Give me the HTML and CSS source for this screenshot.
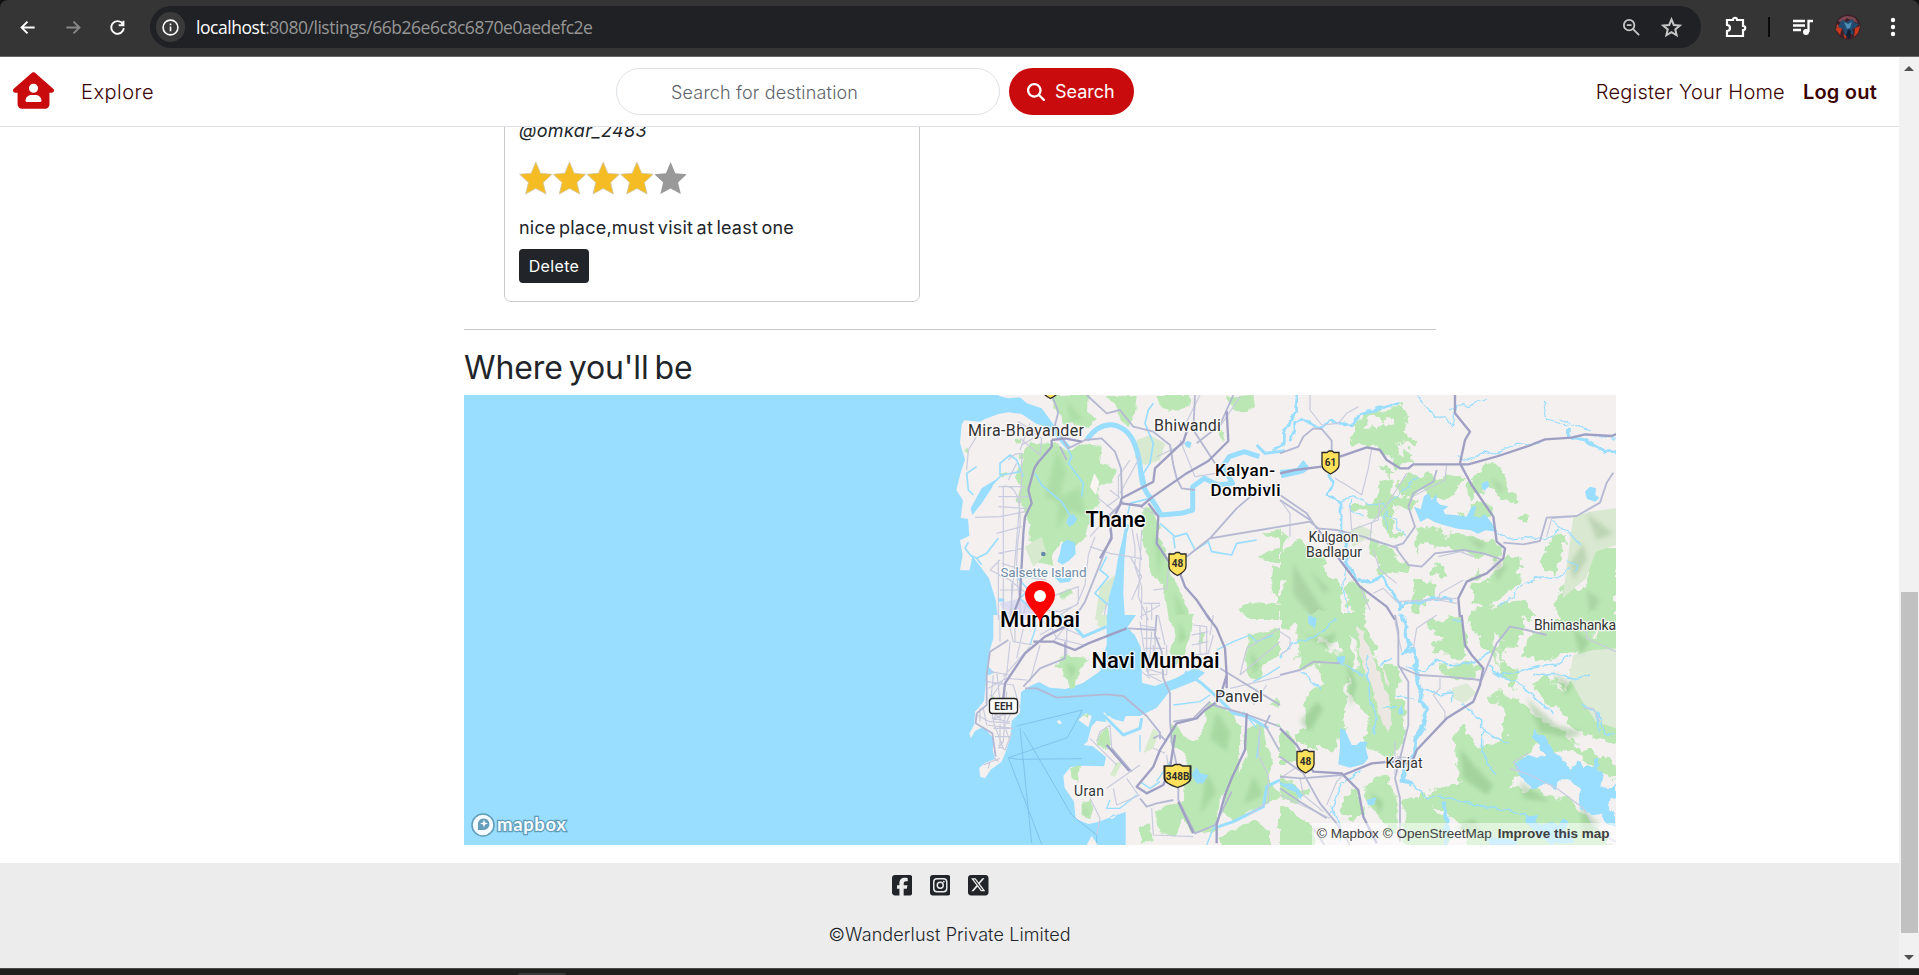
FILE: index.html
```html
<!DOCTYPE html>
<html lang="en">
<head>
<meta charset="utf-8">
<title>Wanderlust</title>
<link rel="stylesheet" href="styles.css">
</head>
<body>
<div class="chrome">
  <svg class="ico back" viewBox="0 0 24 24"><path d="M21 12H5M12 4.500L4.500 12l7.500 7.500"/></svg>
  <svg class="ico forward" viewBox="0 0 24 24"><path d="M3 12h16M12 4.500l7.500 7.500-7.500 7.500"/></svg>
  <svg class="ico reload" viewBox="0 0 24 24"><path d="M18.600 7.400A8 8 0 1 0 20 12.800M19.500 3.500v5.700h-6"/></svg>
  <div class="omnibox">
    <span class="info"><svg viewBox="0 0 20 20"><circle cx="10" cy="10" r="7.800"/><path d="M10 9v5M10 5.700v1.800"/></svg></span>
    <span class="url"><b>localhost</b>:8080/listings/66b26e6c8c6870e0aedefc2e</span>
    <svg class="tool" viewBox="0 0 20 20"><circle cx="7.500" cy="7.500" r="5.500"/><path d="M11.700 11.700L18 18M5 7.500h5"/></svg>
    <svg class="tool star" viewBox="0 0 20 20"><path d="M10 2.300l2.200 5.300 5.700.5-4.300 3.700 1.300 5.600-4.900-3-4.900 3 1.300-5.600L2.100 8.100l5.700-.5z"/></svg>
  </div>
  <svg class="puzzle" viewBox="0 0 22 22"><path d="M2 4h6c0-3 4-3 4 0h6v6c3 0 3 4 0 4v6H2v-5c4 0 4-6 0-6z"/></svg>
  <span class="divider"></span>
  <svg class="media" viewBox="0 0 20 18"><path d="M0 3h12M0 7.500h12M0 12h8M15.500 14V3H20" /><circle cx="13" cy="14" r="3"/></svg>
  <svg class="avatar" viewBox="0 0 26 26"><circle cx="13" cy="13" r="12.500" fill="#3d2028"/><path d="M3 7Q10-1 20 4L23 9 17 7 12 4 7 9z" fill="#7b4650"/><path d="M2 10l5 4-2 7-4-5zM20 14l5-2-2 7-4 4zM8 20l4 2-2 3z" fill="#c7381d"/><path d="M7 6l5 2 5-3 3 4 4 1-4 4-3 1 2 6-5-2-4 3-2-7-5-2 2-4z" fill="#234b72"/><path d="M9 8l4 2 4-2-2 6-3 1z" fill="#4e8eb5"/><path d="M13 15l3 2-1 8-4-3z" fill="#142031"/></svg>
  <svg class="dots" viewBox="0 0 6 20"><circle cx="3" cy="3" r="2.200"/><circle cx="3" cy="10" r="2.200"/><circle cx="3" cy="17" r="2.200"/></svg>
</div>
<div class="window">
  <div class="page">
    <nav class="nav">
      <svg class="brand" viewBox="0 0 576 512"><path d="M575.800 255.500c0 18-15 32.100-32 32.100h-32l.7 160.200c.2 35.500-28.500 64.300-64 64.300H128.100c-35.300 0-64-28.700-64-64V287.600H32c-18 0-32-14-32-32.100 0-9 3-17 10-24L266.400 8c7-7 15-8 22-8s15 2 21 7l255.400 224.500c8 7 12 15 11 24zM352 224a64 64 0 1 0-128 0 64 64 0 1 0 128 0zm-96 96c-44.200 0-80 35.800-80 80 0 8.800 7.200 16 16 16h192c8.800 0 16-7.200 16-16 0-44.200-35.800-80-80-80z"/></svg>
      <a class="explore">Explore</a>
      <div class="search">
        <div class="field">Search for destination</div>
        <div class="go"><svg viewBox="0 0 512 512"><path d="M416 208c0 45.900-14.900 88.300-40 122.700L502.600 457.400c12.500 12.500 12.500 32.800 0 45.300s-32.800 12.500-45.300 0L330.700 376c-34.400 25.200-76.800 40-122.700 40C93.100 416 0 322.900 0 208S93.100 0 208 0s208 93.100 208 208zM208 352a144 144 0 1 0 0-288 144 144 0 1 0 0 288z"/></svg><span>Search</span></div>
      </div>
      <a class="register">Register Your Home</a>
      <a class="logout">Log out</a>
    </nav>
    <main>
      <article class="card">
        <div class="user">@omkar_2483</div>
        <svg class="stars" viewBox="0 0 169 34">
          <defs><path id="star" d="M16.800 1l4.700 11.200L33 13.300l-8.800 8.200L27 33l-10.200-5.600L6.600 33l2.800-11.500L.6 13.300l11.500-1.100z"/></defs>
          <g fill="#f5bd23" stroke="#cfc6a6" stroke-width=".8"><use href="#star"/><use href="#star" x="33.700"/><use href="#star" x="67.400"/><use href="#star" x="101.100"/></g>
          <use href="#star" x="134.800" fill="#999"/>
        </svg>
        <div class="comment">nice place,must visit at least one</div>
        <div class="delete">Delete</div>
      </article>
      <hr>
      <h3>Where you'll be</h3>
      <div class="map">
      <svg class="canvas" viewBox="464 395 1152 450">
        <defs>
          <filter id="soft" x="-20%" y="-20%" width="140%" height="140%"><feGaussianBlur stdDeviation="7"/></filter>
          <!-- roughens the outlines of coasts, lakes and woods -->
          <filter id="ragged" x="-5%" y="-5%" width="110%" height="110%" color-interpolation-filters="sRGB"><feTurbulence type="fractalNoise" baseFrequency=".028" numOctaves="3" seed="4" result="n"/><feDisplacementMap in="SourceGraphic" in2="n" scale="46" xChannelSelector="R" yChannelSelector="G"/></filter>
          <filter id="wavy" x="-5%" y="-5%" width="110%" height="110%" color-interpolation-filters="sRGB"><feTurbulence type="fractalNoise" baseFrequency=".035" numOctaves="2" seed="9" result="n"/><feDisplacementMap in="SourceGraphic" in2="n" scale="20" xChannelSelector="R" yChannelSelector="G"/></filter>
          <path id="shield" d="M-8.500-9.500h5L-1.500-11h3l2 1.500h5V3C8.500 7 4 10 0 12-4 10-8.500 7-8.500 3z"/>
        </defs>
        <rect x="464" y="395" width="1152" height="450" fill="#99ddff"/>

        <!-- land -->
        <g fill="#f3f0ef">
          <rect x="1270" y="395" width="346" height="450"/>
          <path transform="translate(940 390) scale(.33333)" d="M115 15l20 12 30-7 15-5H1020V700H175l-8-70-20-65-28-38-22-28-8 42H60l8-45-8-45 28-14-4-50-22-4 7-52-20-30 12-50 14-42-15-50 5-55z"/>
          <g transform="translate(940 615) scale(.33333)">
            <path d="M160 0v70l-12 40-2 45 18 18-25 10-7 75-27 32-2 38-15 28 5 14 12-22 25-13 30 35-2 35 7 27-30 12-17 14 2 27 15 5 17-26 33-24 12-30 14-40 4-52 25-25 3-61 22-16 32-15 32 17 48 4 52-18 77-54V0z"/>
            <path d="M590 0l-35 40 28 18 20 40 2 108 25 12 52-16-10 38-32 12-38 38-40 2-12 28-30-8-30-22 8 32-28-5-16 18-12 45-12 10 28 4 40 32-6 28-60-2-40 4-22 26 4 36 28 42 5 52 38 15 28-6 72-26 12-4v107h480V0zM415 315l22-20 18 8-10 34zM350 320l8-6 8 10-8 4zM440 690l15-28 18 28zM510 605l12-8 5 8-12 8z"/>
          </g>
        </g>

        <!-- north west quarter -->
        <g transform="translate(940 390) scale(.33333)">
          <g fill="#bbe7b5" filter="url(#wavy)">
            <path d="M330 15h115v50l25 25-25 20-75-10-25-40zM495 15h98l-5 55-22 38-22-12-14-45zM650 15h100l-5 35-40 15-45-15z"/>
            <path d="M345 160l40 25 40-25 60 10-5 50 50 20-10 35-40 10-10 30 15 20-30 35-15 70-45 40-30-25-30 40 5 35-45-10 10-45-40-25 5-45-20-50-20-20 10-40-15-35 20-50 15-40 15-15z"/>
            <path d="M610 350l30 5 20 55-10 30 30 40 5 50 35 70 30 70-10 40h-50l-20-130-35-20-10-60-20-50zM860 20l80-5 5 35-25 20-35-8-20-30zM825 120l30 10-5 20zM965 430l55-10v30zM950 500l70-30v50l-40-5zM1000 530l20 5v90l-28-30zM890 655l50-20 80 10v45h-90z"/>
            <path d="M225 147l15-2v15h-15zM240 190h15v12h-15zM70 190l12-15v20zM175 250l25-8-8 22zM360 610l30-15 10 20-35 15z"/>
          </g>
          <g fill="#d7ead0"><path d="M590 150l40-15 45 25-15 50-45 15-30-20zM480 590l45-35-5 60-45 75h-10zM255 470l50-30 15 50-40 40z"/></g>
          <g fill="#98cf92" opacity=".38" filter="url(#soft)"><path d="M350 180l30 60-20 80 60-30 20 90-50-20-40 60 5-80-40-20zM380 30l50 60-40 5zM640 430l30 60-15 70zM700 600l40 70-30 20z"/></g>
          <path fill="#fbf5f2" d="M463 250l15 25-10 40-18-25z"/>
          <path fill="#dcdcf2" d="M180 640l60-15 60 30-20 35h-80z"/>
          <g fill="#99ddff">
            <path d="M50 15h115l40 10 35-3 20 18 45 15 22 30 35 50 30 35-8 12-60-70-34-10-45-30-40-5-30 5-40 15-15 8-55-5z"/>
            <path d="M165 270l-10 25-30 45-28 35-5-20 33-60zM385 380l15-8 12 15-10 15-15 8-8-14zM365 462l15-13 25 8 2 35-20 20-20 12-15-10 8-25zM338 555l35 10 35-12-20 22-28 4zM733 160l10-8 12 6-5 17-12-5zM175 625h18v10h-18z"/>
            <path d="M557 400l-8 40-14 60-10 60-18 60-7 70h55l-5-80 3-100 8-80 8-25z"/>
          </g>
          <g class="river"><path stroke-width="15" d="M440 150q35-50 80-45 45 8 65 60 15 40 18 90 5 45 30 70 20 30 30 50l60-5 35-10v-70l35-25 40 20 45-5-30-50 20-30 45-15 45 15"/>
            <path stroke-width="9" d="M950 165l25 25 60-8"/>
            <path stroke-width="5" d="M90 495l20 10 30-15 35-45M95 500l-20-25 10-18M110 505l15 20M150 290l35-35 55-10M180 255v-35l30-25 20 15 20 50M100 315l-15-15-5-50 30-20M385 180l10 20-10 20 45 60-5 40M285 250l20 35 60 50 30 50M620 300l-10-50 20-30 10-60-25-60 10-40 15-20M660 400l45 40 35-10 25 50 40-25 10 30 60 10 15-35 60-10M700 440l5 35M500 500l-20 40 25 20-40 50 40 35M560 390l10-50 60-15M230 560l35 40-25 25 30 30"/></g>
          <g class="road thin"><path d="M185 290q60-15 55 120-20 120 0 220v60M205 210q15-20 40-20v80l-15 180-20 240M175 290h80M175 320h90M190 290v400M175 350l85 5M180 380l75-15M105 382l80-2M170 430l75-20M175 490l75-15M185 520l65 20M180 560l80-20M180 600h70M230 220l-25 50M215 580v110M150 540l60 30 60 50M175 510v180M150 540l30-30M250 560l70 10M255 590l80 30 80-30v50l-70 45M265 620l-20 70M270 100l-30 80M240 145l60 50 5-50-65-40-5-10 50 30M245 165l35-20M490 690l10-50M465 440l-20 55-10 90-25 60-50 20-90-10M450 470l60 20 90 15M470 320l60 50M510 300l25 20v-60l35-50M500 350l40-30M600 200l-60 110M605 420l-10 200 30 70M575 410l10 60v60l20 60v100M590 430l15 80M540 340l-90 100M600 350l60 30M640 600l40-5 10-110M610 640h50M600 680l60-35M570 500l35 60-30 70M620 650v40M635 640v50M80 240l5-60 30-50 50-20M650 200l85-40M720 150l45 110 130-20M780 15l-40 80M900 20l-60 90"/></g>
          <g class="road"><path d="M335 15l20 50-10 40 40 70 50-25 50-5 40 40 18 50 3 90M440 15l60 55 40-10 40 50 60 15 50 40 10 60 10 40 15 30 40 5M765 15l-5 105 65 100M880 15l-40 90-70 55M810 445l80-90 70-60 60-10M740 500l70-55 210-35M550 335l-40 40 5 60-80 200-35 55M360 170l20 40"/></g>
          <g class="road major"><path d="M335 150v20l-30 35q-20 20-25 40l-15 55 10 40-20 40-5 50-10 190-15 40M335 150l40-5 50 10M545 325l95-50 5-40 85-80 10-30M545 340l60 8 30-25 100-70 70-40 60-60-5-90M625 340l30 40-5 80 40 60 30 30 15 40 35 40 40 60M545 325l-5 20-30 60 5 40-35 60"/></g>
          <circle cx="310" cy="492" r="7" fill="#6488a5"/>
        </g>

        <!-- north east quarter -->
        <g transform="translate(1280 390) scale(.33333)">
          <g fill="#bbe7b5" filter="url(#ragged)">
            <path d="M240 85l50-30 40 15 15-25 15-5 25 35-8 15 5 40 20 25v5l-65 5-20 20-20-25-30 5-35 5-10-15-10-10z"/>
            <path d="M315 175l30-10 10 15-5 15 20-20 25 5-5 20 15 10v15l-15-10-40 20-10-25-30-20zM300 225h25l20 15-20 5 15 45-5 25 35 10 20-15-20-20-5-20 30 5 10 30-15 20 30 10-25 30-55-20v30l-60 5-20-20-50 5v-20l60-5 25-15 10-50 25-15z"/>
            <path d="M375 245l45 10 60 10 15-10 30 15 30-15 10 10-35 25-10 25-35 25-45-20-30-20-40 15-20-30zM560 280l45-35 10-25 20-10 10 30 35 20v45l35 20-25 15-40-30-35-10-45 30zM545 375l50-35 35 5 10 15-40 40-50 5zM412 400l40 15 50 20 20-10 60 20 80 10 5 40-30 10-50-10-50-15-60-5-50-15-15 40zM270 450l30 10 40 25 20 25 25-5 5 40-40 10-50-5-5-40-30-25zM310 370l30 10 10 45 25 5-10 20-40-20-15-35zM450 540l20-15 20 10 5 25-45-5zM400 580l20-10 55 10-10 35-30 10-15 40-20-5v-40zM710 385l20-15 15 10-20 15z"/>
            <path d="M680 490l35 10 5 90-50 25-50 40-50-20 15-50 40-10 50-60zM560 560l30-15 10 15-30 20zM790 490l40-60 30 15-20 60-15 45-25-15-20-20zM670 630l60-10 30 60-60 10-30-30zM820 640l40-60 30 20 30-30 5-110 83 20V710H840z"/>
            <path d="M0 420l20 30-10 40 40-40 40 20 40 30 5 50 60 40-20 30 30 60-10 30H0zM195 600l20-30 40 20 10 50-40 40-20-30zM590 660l80-20 10 50h-80z"/>
          </g>
          <path fill="#f3f0ef" filter="url(#ragged)" d="M255 90l30-10 15 15-10 15-30 5zM310 75l35 5-5 20-25 10-15-15zM0 575l20 5-5 30-15 5zM350 190l15-10-5 20z"/>
          <g fill="#d9e8d0"><path d="M200 430l40-25 40 20-20 20-40 25zM880 380l50-15 78-10v110l-60 20-30 80-70 60z"/></g>
          <g fill="#94b98c" opacity=".4" filter="url(#soft)"><path d="M40 520l50 80 60 90h-50l-60-80zM90 540l60 60-20 10zM630 260l40 30-10 20zM560 440l60 20-20 20zM640 500l40 30-30 50zM920 370l80 60-50 20zM870 520l40-60 10 50-40 60zM920 600l40 30-30 50z"/></g>
          <g fill="#99ddff"><path d="M402 350l20 8 10-40 15-8 8 20 15-18v22l10 10 25 5-15 12 5 12 30 2 35 5 15-30 15-2-10 30 20 5 15-10 20 25 18 28-35-5-25 10-20-10-40-5-40-10-30-10-20-12-22 12z"/><path d="M605 280l18-8 5 15-15 15-8-8zM915 305l15-15 18 5-2 20 12 8-12 12-25-8zM0 240l50-5 20-25 20 25-20 15-65 15zM77 665l20 15v10H78z"/></g>
          <g class="river" filter="url(#wavy)"><path stroke-width="8" d="M50 15v50L10 130v30l-25 20M30 150l15-55 30-5 50 25 25-20 60 10 35-35 60-15 50-15M145 255l15 25-22 35 45 20v90l20 40-5 50 30 55 50 5 25-20 25 35 15 30 15 20v20l20-25 40 5 40-15 60 5M865 110v30l50 10 60 35h30"/>
            <path stroke-width="3.500" d="M410 20l40 35 15 30 30-5 20 30 15-60M510 60l25-15 30 5 55-25M790 30l10 60 60 15M530 200l30 10 50-25 30 10 70-35 40 5 35-10M180 330l40-10 50 25 40-5 15 40 30 5-5 30 30 20M215 330l-5 30 40 20M650 430l30 15 60-5 50 10 50-30M820 395l30 25 20 10 30 35M860 510l30 15-5 20M700 620l10-30 60-25 70-5 30-30M650 650l50-30M200 500l-10 100 20 80M320 420l-5-60M840 90l90 30M920 135l90 10M320 340l100-80"/></g>
          <g class="road thin"><path d="M90 15l0 45 35 45 50-5 25-30 35-20M165 265l50 30 30 20 20-80 10-60M300 330l-5 60-80 30-5-70M380 250l-50 80-55 70-5 50M500 220l-5 50-100 50M475 500l65-15 40 15M800 440l15-55 60-5M280 480l20 60 50 40M550 570l-70 40-5 20 55 10M280 610l30-15 40 40 180-10M240 590l30 70M0 330l30 40v70"/></g>
          <g class="road"><path d="M0 190l55-20 15-30 30-25 25 2 30 35v40M0 315l80 55 30 45 60 5 80 20 90 30 30-10 35-50-20-60 15-40 60-35 10-35M0 410l90-15 25 20M345 470l40 55 40 5 40-40 85-10 60 10 60 20M670 458l60 5 50-10 20-70 90-5 70-40 20-60 20-30M260 445l95 30M0 330l90 60"/></g>
          <g class="road major"><path d="M0 250l45-10 80-10M180 200l80-28 40 8 20 30 40 25h25l15-12h165l90-25 90-30 50-20 80-5 40-10 80 5 25-10M525 15v55l45 55-15 25-15 70 35 65 65 95 10 75 25 20-5 30-50 45-60 25-25 50 5 60M115 420l65 90 60 80 80 60 25 40"/></g>
        </g>

        <!-- south west quarter -->
        <g transform="translate(940 615) scale(.33333)">
          <g fill="#bbe7b5" filter="url(#wavy)">
            <path d="M375 120l30 5 45 5-30 30-15 55-20 5-20-60-25 0zM700 0h60l-10 60-20 60-20 30-20-30 15-60zM925 60l45-10 50-10v80l-50 30-10 45-35-10-10-70 15-30z"/>
            <path d="M690 330l30 10 15 30 40 5 25-60-5-35 30-15 50 30 25 40 0 80-10 80-50 50-10 100-70 10-40-60 15-80 20-45-25-60-35-20z"/>
            <path d="M920 340l50-10 10 70 15 30-5 70 30 40-30 20-60 30-50 30-30-30 5-60 35-50 30-60-10-60zM985 265l35-15v25zM645 590l30-20 50-5 10 40-30 60-50-15zM600 635l30-10 5 50-35 10zM840 670l60-40 50-10 40 30v50H850z"/>
            <path d="M480 350l25-15 8 60-20 10-18-20zM425 560l30-5 5 30-10 25-25-10zM430 295l20 5-5 15zM390 460l30-10-5 45-20-5zM145 245l15 0v15zM780 50l15 0-5 30-15 5z"/>
          </g>
          <path fill="#d6eccd" d="M475 0h27l-5 40-25-8zM530 440l15 5-20 40-15-5zM640 340l15 15-15 45-30 15z"/>
          <g fill="#8dc487" opacity=".4" filter="url(#soft)"><path d="M720 20l20 50-25 20zM380 140l30 20-20 40zM830 290l40 60-10 60-50-40zM800 470l30 60-50 70zM930 100l30 50-20 30zM940 480l30 60-60 30zM435 570l10 30-15 5z"/></g>
          <g fill="#99ddff"><path d="M500 0h88l-25 35 20 28 22 50v90l40 10 65-25 55-30 30 15-30 25-75 30-40 50-50 25H500L480 150l20-60zM755 480l15-25 10 20 25 5-15 25-20 0z"/></g>
          <g class="river"><path stroke-width="9" d="M360 0l40 30 30 35 70-30M735 170l50 35 45 40 50 50 45 10 60 35M490 300l60 60 50-20 5-30M820 640l60-20 90-45 10-60 40-20"/><path stroke-width="4" d="M700 270l80-10 30-20M600 360v50M1000 60l-50 20-20-20-50 20-50 25M590 540l-50 40-40 0 10-25M660 500l-30 20-30-20M940 200l40-20 40-25M960 350l-10 80M800 690l20-50M690 440l-40 60M270 90l20-60M910 290l40 50"/></g>
          <g class="ferry"><path d="M230 333l197-48-45 83-177 60 100 260M240 340l35 345M250 350l145 250 75 60v25M205 428l30 5 190-2"/></g>
          <g class="road thin"><path d="M180 0v80M200 0l20 80 60 10M225 10v70M250 40l-20 90M270 95l-80 90M300 90l-30 110M210 80l-10 100 -55 80M150 170l60 10 30-40M140 200l80 10 20 70M145 220l55-30 60 5M160 180l-10 100 40 40 20 60M170 170l10 90-20 60 30 80M110 300l40 20 60 5M120 280v40M130 280l10 50M155 290l10 50M180 270v130M200 230l-10 150-15 20M215 290l-50 20M225 270l-30 60M155 310l55 10M160 340h50M165 365h45M175 390l20 15 20-50M140 330l80 10M130 450l50-20M150 440l-5 20M165 430l10 10M330 30l20 40 80 20M380 40v80M300 60l50-30 70 30M340 80l40-50M600 20l10 70 15 90M620 10v160M635 50l-10 130 40 20M610 70h50M615 100h60M620 130h50M620 160l60 20M680 90v90M760 30l40 5v80M755 60l50-10M755 90l50-10M765 120l40-5 15-55M780 30v90M820 0l-10 60M605 170l25 20M640 90v60M655 0l20 90M620 180l50-5M645 60v90M600 30l50 10M450 370l80 80M470 380l10-30 30-20 5 70M500 520l100-70M520 520l10 50 70-30M560 490l35 50M450 550l30 60-10 50M900 180l20-80 100-60M870 220l150-35M1020 80l-120 100M940 270l40-60M960 330l-5 90 30 60v80l-60 40M640 400l35 15M680 420l10 80M635 580l5 80 120 5"/></g>
          <g class="road"><path d="M205 75l-55 35-10 70v90l-30 25-3 30 50 30 10 70M255 220h35l60 28 150-10 50 5 70 60 40 50v20M250 215l50-55 75-30 0-50M650 0l-5 60 20 50 5 80 20 45v80l5 65 15 70M840 160l180 110M820 270l105 30 95 35M990 300l-15 30 45 80M715 500v55l50 100 60-25 50-100M600 550l20 25 30-10 50-10M650 45l-85-5M700 320l60-10 50-50M500 390l70 75M515 400l60 70M640 370l20-10 20 20"/></g>
          <g class="road major"><path d="M375 35l-60 30-60 50-60 90-10 90M280 80h60l65 25 40-20 115-45M800 0l30 40 25 60 5 80-15 50-20 35-30 20-25 25-60 15-25 40-25 40-20 50-50 60 30 20 50-25 20-50 15-100M500 390l68 78M860 180l0 40M920 295l-5 110-40 85-20 50-25 90v55M715 560l45 95"/></g>
        </g>

        <!-- south east quarter -->
        <g transform="translate(1280 615) scale(.33333)">
          <g fill="#bbe7b5" filter="url(#ragged)">
            <path d="M50-15h200l25 95 20 60 65 25-10 80 30 70-20 80-25 40-50-10-30-50 10-60-60-90 0 60-40 130-60-20-50-10-5-30 30-20 0-100 50-35-15-50-60 10 0-50z"/>
            <path d="M435 20l80-15 35 15 15 80-20 35-30-15-60-5 25-40zM570-10h150l20 40-30 60-50 20 20 40 35 15-5 50-35-15-30-60-25-35-45-60zM480 150l40 10 50-25 30 25-20 35-60-5-30-10zM750 60l50-20 60-40h168v390l-80-20-80-40-30-50-60-40-20-40 50-20 50 40 20-30-10-70-30 10-40 15-30-20-50 10z"/>
            <path d="M525 345l25-15 35 70 90-20-5-100-50-40 40-5 60 20 60 60 60 20 50 60 40 10 80 50v45l-70-35-40-50-40-10-50 20-20-50-70 70-20 80 70 0 90 30 70 60 50 60 40 70H610l-50-60-30-70-30-30-75-20-5-30 60-10 55-20z"/>
            <path d="M0 330l50 50 0 70-50 0zM0 480l40 20 40 30-10 30-40 0-30-20zM185 560l30-30 25 20 10 40-40 20-20-15zM250 510l40-35 30 15 30 40 0 100-20 30-40-60-30-30zM370 560l40-20 40 30 60 60 0 80H370zM0 580l40 10 50 50 30 70H0z"/>
          </g>
          <path fill="#f3f0ef" filter="url(#ragged)" d="M215 50l22 70 8 50-20-20-15-60zM200 175l12 60-8 70-10-50zM120 70l45 10 20 30-50-5zM640 60l35 20-20 25zM840 120l60-5-20 40-35 10zM820 200l35 25-30-5zM720 10l40 30-25 15zM640 110l30 30-10 20zM950 35l10 30-20 10z"/>
          <g fill="#dcead6"><path d="M515 220l45-15 30 30-40 30-30-15zM880 120l60-15 68-5v240l-60-20-40-60-40-70z"/></g>
          <g fill="#ede7e4" filter="url(#wavy)"><path d="M230 30l20 20 20 60 20 40 30 90 20 60-15 50-30-60-20-80-30-60zM305 150l20 40-5 30z"/></g>
          <g fill="#85b97f" opacity=".42" filter="url(#soft)"><path d="M70 60l60 10 40-20-20 50zM60 320l50-60 20 20-40 70zM200 130l30 80-20 70zM540 400l50 60 50 50-20 30-70-50zM720 500l90 60-80-10zM820 170l60 40-20 30zM740 250l90 80 80 20-40 20-90-20zM520 640l60-30 30 50zM900 570l60 60-50 30zM880 40l50 40-30 40zM270 530l40 30-10 40z"/></g>
          <g fill="#99ddff"><path d="M180 340l15 5 20 45 15 0 10-10 22 0-5 20 8 30-15 18-40 10-35-10 5-50zM260 555l30-8-8 22-18 2zM170 125l25-2-2 20-20 0zM355 285l10-15 6 28-15 0zM85 0l25 10-5 30-20-15z"/>
            <path filter="url(#wavy)" d="M705 440l35-22 30 10 30-5-20-25-25-35 5-22 15 15 25 15 20 40 40 30 10 20 30-20 10 15 35 0-5-25 18 5-5 30 20 10-15 35 30 15 20-20 0 40-20 5-5 25 25 30v35l-30-20-15-25-25 5-30-15-15-40 10-20-30-30-40 0-5 35-30-30-25 20-30-10-25-30z"/>
            <path d="M740 605l35-5-10 20 20 10 30-10 20 10 15-20 15 10-20 50-30 20-40-30-40-40zM830 650l50 5 0 30-50 0zM620 665l90 10 0 15-80 0z"/></g>
          <g class="river" filter="url(#wavy)"><path stroke-width="11" d="M365 0l15 30-5 40 15 20-20 25 35-10 5 80 15 40-5 30 20 30-15 60-20 30 0 40-30 25-5 55 25 15M0 500l40 20 30 30M490 560l10 50v80"/><path stroke-width="4.500" d="M390 500l50 50 60-5 60 20 60 10 60 10 70 20M545 265l60 50 0 30 80 40M605 350l0 60 40 70M640 170l30 20 40 10 60 55 50 40M630 150l30 30 60-10 50-15 60-5 40-30M760 180l60-5 60 20 50-15M380 160l60 10 30-40 40 20 80-10 40-30M425 220l60 20 30-10 0 30M260 120l10 140 20 40-10 60M300 145l40-15M0 130l40-50 60-10 70-60M60 170l60 50M170 140l80 40M150 600l30-90 60-40M150 570l30 60v50M310 275h40M905 270l50 25 20 60 30 5M960 350l-10-60M520 10l30 10M350 240l50 10"/></g>
          <g class="road thin"><path d="M480 190v30l-20 20 35 50 0 25M870 30l50 20 0 20 88 40M690 460l60 20 80 40 80 60 40 70 58 30M745 415l-45 25 20 30M345 380v100M400 430l-50-5M600 200l-30-15M60 490l10 50 60 50M140 570l30-70 20-20M0 540l150 70M45 460l-45 30M910 280l30 0 20 40M0 50l30 20v30L0 120M345 20l20 90M400 100l10-60 60-40"/></g>
          <g class="road"><path d="M345 0l10 50v100l30 50v130l-20 80-20 80 15 60v130M0 180l60-15 40-25 80 5M355 155l60 25 80 5 110 10M605 195l45-110 40-50 50 10 60 15M0 425l70 50 50 90 50 60 40 65M0 485l65 5 120-10M0 520l60 40 80 50M100 640l40 60M350 430l60 15"/></g>
          <g class="road major"><path d="M545 0l10 90 20 30 35 40-10 50-20 50-80 50-90 95-15 40-60-5-60 5-85 35M0 340l50 50 50 80 85 5 50 50 15 80 40 80"/></g>
        </g>

        <!-- place names -->
        <g class="place">
          <text x="968" y="436" textLength="116">Mira-Bhayander</text>
          <text x="1154" y="431" textLength="67">Bhiwandi</text>
          <text x="1215" y="702" textLength="48">Panvel</text>
          <g class="small"><text x="1308.500" y="542" textLength="50">Kulgaon</text><text x="1306" y="557" textLength="56">Badlapur</text><text x="1074" y="796" textLength="30">Uran</text><text x="1385.500" y="768" textLength="37">Karjat</text><text x="1534" y="630" textLength="82">Bhimashanka</text></g>
        </g>
        <text class="island" x="1000.500" y="577" textLength="86">Salsette Island</text>
        <g class="city">
          <g class="mid"><text x="1215" y="475.500" textLength="60">Kalyan-</text><text x="1210.500" y="495.500" textLength="70">Dombivli</text></g>
          <text x="1085.500" y="526.500" textLength="60">Thane</text>
          <text x="1000" y="627" textLength="80">Mumbai</text>
          <text x="1091.500" y="668" textLength="128">Navi Mumbai</text>
        </g>
        <!-- road shields -->
        <g class="shield">
          <use href="#shield" x="1050.500" y="386.500"/><use href="#shield" x="1330.500" y="462"/><use href="#shield" x="1177.500" y="563.500"/><use href="#shield" x="1305.500" y="761"/><use href="#shield" transform="translate(1177.500 775.500) scale(1.530 1)"/>
        </g>
        <rect x="989.500" y="698.500" width="28" height="15" rx="3" fill="#fff" stroke="#222" stroke-width="1.300"/>
        <g class="route"><text x="1330.500" y="466">61</text><text x="1177.500" y="567">48</text><text x="1305.500" y="765">48</text><text x="1177.500" y="779.500">348B</text><text x="1003.500" y="710">EEH</text></g>
        <path d="M1040 581c-8.500 0-15 6-15 14 0 11 12 17 15 27 3-10 15-16 15-27 0-8-6.500-14-15-14z" fill="#f00"/><circle cx="1040" cy="596" r="6" fill="#fff"/>
        <!-- map provider mark -->
        <circle cx="483" cy="825" r="11" fill="#f5fbfe" stroke="#5f9cb9" stroke-width="1.500"/>
        <path d="M478 830v-4.500a5.800 5.800 0 1 1 5.800 4.500z" fill="#659eba"/><path d="M484 819.500l1 3 3 1-3 1-1 3-1-3-3-1 3-1z" fill="#fff"/>
        <text class="mark" x="497" y="830.500" textLength="69">mapbox</text>
      </svg>
      <div class="attrib"><span>© Mapbox</span> <span>© OpenStreetMap</span> <b>Improve this map</b></div>
      </div>
    </main>
    <footer>
      <div class="social">
        <svg viewBox="0 0 448 448"><path d="M64 0C28.700 0 0 28.700 0 64v320c0 35.300 28.700 64 64 64h98.200V302.300h-52.800V224h52.800v-33.700c0-87.100 39.400-127.500 125-127.500 16.200 0 44.200 3.200 55.700 6.400V140c-6-.6-16.500-1-29.600-1-42 0-58.200 15.900-58.200 57.200V224h83.600l-14.400 78.300h-69.200V448H384c35.300 0 64-28.700 64-64V64c0-35.300-28.700-64-64-64z"/></svg>
        <svg viewBox="0 0 448 448"><rect width="448" height="448" rx="64"/><rect x="82" y="82" width="284" height="284" rx="70" fill="none" stroke="#ececec" stroke-width="32"/><circle cx="224" cy="224" r="65" fill="none" stroke="#ececec" stroke-width="32"/><circle cx="302" cy="146" r="19" fill="#ececec"/></svg>
        <svg viewBox="0 0 448 448"><path fill-rule="evenodd" d="M64 0C28.700 0 0 28.700 0 64v320c0 35.300 28.700 64 64 64h320c35.300 0 64-28.700 64-64V64c0-35.300-28.700-64-64-64zm297.100 72L256.200 191.900 379.500 355H283l-75.600-98.900L121 355H73l112.200-128.300L67 72h99l68.300 90.300L313.100 72zm-37.800 254.400L151.900 99.100h-28.700l173.400 227.300z"/></svg>
      </div>
      <div class="copy">©Wanderlust Private Limited</div>
    </footer>
  </div>
  <div class="scrollbar"><i class="up"></i><i class="thumb"></i><i class="down"></i></div>
</div>
<div class="taskbar"><i></i></div>
</body>
</html>
```
FILE: styles.css
```css
* { box-sizing: border-box; }
body { margin: 0; width: 1919px; height: 975px; overflow: hidden; background: #fff; color: #212529; font-family: Inter, "Liberation Sans", sans-serif; display: flex; flex-direction: column; }
svg { display: block; flex: none; }

.chrome { height: 57px; flex: none; background: #353535; border-bottom: 1px solid #6a6668; display: flex; align-items: center; padding: 0 0 2px 18px; border-radius: 8px 8px 0 0; box-shadow: 0 -10px 0 10px #111; clip-path: inset(0); }
.ico { width: 19px; height: 19px; fill: none; stroke: #fff; stroke-width: 2.400; }
.forward { margin-left: 27px; stroke: #888; }
.reload { margin-left: 25px; }
.omnibox { margin-left: 23px; width: 1551px; height: 42px; border-radius: 21px; background: #202124; display: flex; align-items: center; padding: 0 19px 0 6px; margin-top: 0; }
.info { width: 29px; height: 30px; border-radius: 15px; background: #3a3a3b; display: flex; align-items: center; justify-content: center; }
.info svg { width: 19px; height: 19px; fill: none; stroke: #fff; stroke-width: 1.700; }
.url { flex: 1; margin-left: 11px; font: 17.500px "Open Sans", "Noto Sans", sans-serif; letter-spacing: -0.460px; color: #969696; white-space: nowrap; }
.url b { font-weight: 400; color: #fff; }
.tool { width: 19px; height: 19px; fill: none; stroke: #c7c7c7; stroke-width: 1.900; }
.star { margin-left: 20px; width: 21px; height: 21px; }
.puzzle { width: 22px; height: 22px; margin-left: 24px; fill: none; stroke: #fff; stroke-width: 2.200; }
.divider { width: 2px; height: 20px; margin-left: 21px; background: #0a0a0a; }
.media { width: 20px; height: 18px; margin-left: 23px; fill: #fff; }
.media path { fill: none; stroke: #fff; stroke-width: 2.300; }
.avatar { width: 26px; height: 26px; margin-left: 22px; }
.dots { width: 6px; height: 20px; margin-left: 29px; fill: #fff; }

.window { flex: 1; min-height: 0; display: flex; }
.page { flex: 1; display: flex; flex-direction: column; }
.nav { height: 70px; flex: none; border-bottom: 1px solid #dee2e6; display: flex; align-items: center; padding: 0 22px 0 13px; font-weight: 300; font-size: 20px; letter-spacing: .220px; color: #3a0404; white-space: nowrap; }
.brand { width: 41px; height: 37px; fill: #ca0b0d; margin-bottom: 2px; }
.explore { margin-left: 27px; width: 73px; letter-spacing: .500px; }
.search { margin-left: 462px; display: flex; gap: 9px; }
.field { width: 384px; height: 47px; border: 1px solid #dee2e6; border-radius: 24px; padding-left: 54px; line-height: 47px; font-size: 18px; letter-spacing: .180px; color: #5d636a; }
.go { width: 125px; height: 47px; border-radius: 24px; background: #ca0b0d; color: #fff; display: flex; align-items: center; font-size: 18px; letter-spacing: 0; font-weight: 400; padding-left: 18px; gap: 10px; }
.go svg { width: 18px; height: 18px; fill: #fff; }
.register { margin-left: auto; }
.logout { margin-left: 18px; font-weight: 600; }

main { height: 736px; flex: none; overflow: hidden; padding-left: 464px; }
.card { width: 416px; height: 196px; margin: -21px 0 0 40px; border: 1px solid #c9cacb; border-radius: 7px; padding: 12px 0 0 14px; }
.user { height: 24px; line-height: 24px; font-size: 18px; font-style: italic; letter-spacing: .350px; }
.stars { width: 169px; height: 34px; margin-top: 18px; }
.comment { margin-top: 21px; height: 24px; line-height: 24px; font-size: 18px; letter-spacing: .220px; word-spacing: -1.900px; white-space: nowrap; }
.delete { margin-top: 9px; width: 70px; height: 34px; border-radius: 4px; background: #212529; color: #fff; font-size: 16px; letter-spacing: .350px; line-height: 34px; text-align: center; }
hr { margin: 27px 0 0; width: 972px; border: 0; border-top: 1px solid #c5c6c7; }
h3 { margin: 17px 0 0; height: 48px; line-height: 42px; font-size: 32px; font-weight: 400; letter-spacing: -.100px; word-spacing: -3px; }
.map { width: 1152px; height: 450px; display: grid; }
.canvas { grid-area: 1 / 1; width: 1152px; height: 450px; }
.attrib { grid-area: 1 / 1; place-self: end; height: 22px; width: 304px; padding-left: 5px; background: rgba(255,255,255,.55); color: #404040; font: 13.500px/22px "Liberation Sans", sans-serif; white-space: nowrap; display: flex; gap: 4px; position: relative; }
.attrib b { margin-left: 2px; }

.river { fill: none; stroke: #99ddff; stroke-linejoin: round; }
.ferry { fill: none; stroke: #80c3ec; stroke-width: 3; }
.road { fill: none; stroke: #b5b8d2; stroke-width: 5.500; stroke-linejoin: round; }
.thin { stroke: #c9cbde; stroke-width: 3.500; }
.major { stroke: #9f9fc3; stroke-width: 7; }
.place text, .island, .city text { font-family: Roboto, sans-serif; paint-order: stroke; stroke: #fff; stroke-width: 2.500px; stroke-opacity: .8; stroke-linejoin: round; }
.place text { font-size: 16px; fill: #333; }
.place .small text { font-size: 14px; }
.island { font-size: 13.500px; fill: #6f8ca6; }
.city text { font-size: 22px; font-weight: 500; fill: #000; }
.city .mid text { font-size: 17px; }
.shield { fill: #ffe15c; stroke: #292929; stroke-width: 1.300; }
.route text { font: 700 10px Roboto, sans-serif; text-anchor: middle; fill: #2d2d2d; }
.mark { font: 700 18.500px Lato, sans-serif; fill: #f5fbfe; paint-order: stroke; stroke: #5f9cb9; stroke-width: 2.500px; }

footer { flex: 1; background: #ececec; padding-top: 12px; }
.social { display: flex; gap: 17.800px; margin-left: 891.500px; }
.social svg { width: 20.500px; height: 20.500px; fill: #212529; }
.copy { margin: 26px 0 0 828.500px; font-size: 18px; line-height: 26px; font-weight: 300; letter-spacing: .110px; white-space: nowrap; }

.scrollbar { width: 20px; background: #f1f1f1; display: flex; flex-direction: column; align-items: center; }
.up, .down { border: 5px solid transparent; width: 0; height: 0; }
.up { border-bottom-color: #505050; border-top: 0; margin-top: 9px; }
.thumb { width: 17px; height: 341px; background: #c1c1c1; margin-top: 521px; }
.down { border-top-color: #505050; border-bottom: 0; margin-top: 22px; }
.taskbar { height: 7px; flex: none; background: #20211f; border-top: 1px solid #4a4d49; padding: 4px 0 0 518px; }
.taskbar i { display: block; width: 48px; height: 2px; background: #3a3a3a; border-radius: 2px 2px 0 0; }
```
